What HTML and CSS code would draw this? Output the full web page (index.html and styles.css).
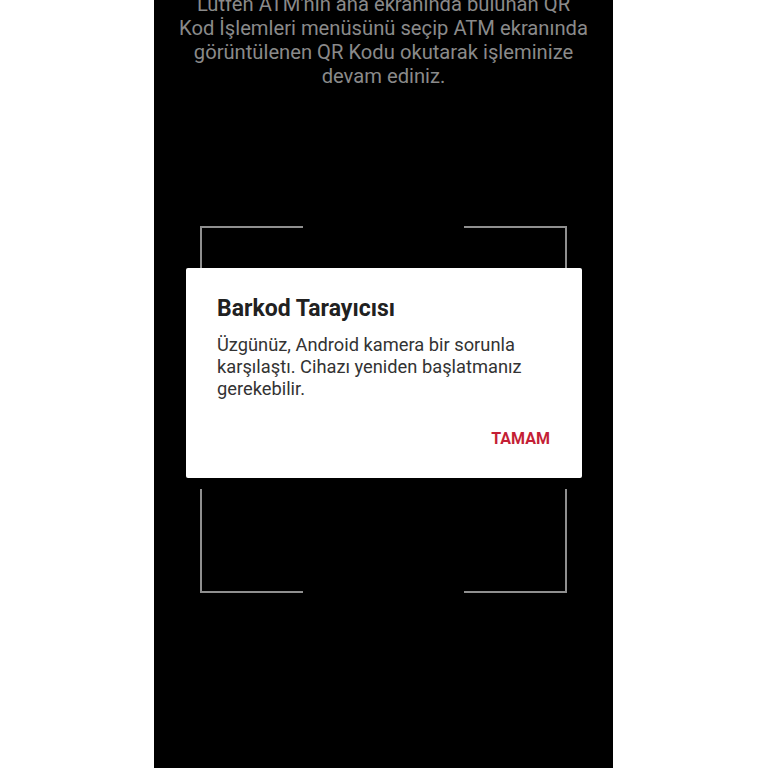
FILE: index.html
```html
<!DOCTYPE html>
<html lang="tr">
<head>
<meta charset="utf-8">
<link rel="stylesheet" href="styles.css">
</head>
<body>
<div class="page">
  <div class="phone">
    <p class="hint">Lütfen ATM'nin ana ekranında bulunan QR<br>Kod İşlemleri menüsünü seçip ATM ekranında<br>görüntülenen QR Kodu okutarak işleminize<br>devam ediniz.</p>
    <div class="frame">
      <span class="corner tl"></span>
      <span class="corner tr"></span>
      <span class="corner bl"></span>
      <span class="corner br"></span>
    </div>
    <div class="dialog">
      <h2 class="dialog-title">Barkod Tarayıcısı</h2>
      <p class="dialog-body">Üzgünüz, Android kamera bir sorunla karşılaştı. Cihazı yeniden başlatmanız gerekebilir.</p>
      <div class="dialog-actions"><span class="btn">TAMAM</span></div>
    </div>
  </div>
</div>
</body>
</html>
```

FILE: styles.css
```css
html, body {
  margin: 0;
  padding: 0;
  background: #ffffff;
  font-family: Roboto, "Noto Sans", sans-serif;
}
.page {
  width: 768px;
  height: 768px;
  overflow: hidden;
  display: flex;
  justify-content: flex-start;
}
.phone {
  position: relative;
  margin-left: 154px;
  width: 459px;
  height: 768px;
  background: #000000;
  display: flex;
  flex-direction: column;
  align-items: center;
  overflow: hidden;
}
.hint {
  margin: -8px 0 0 0;
  width: 440px;
  text-align: center;
  color: #8a8a8a;
  font-size: 20.2px;
  line-height: 24px;
  white-space: nowrap;
}
.frame {
  position: relative;
  margin-top: 138px;
  margin-left: -1px;
  width: 367px;
  height: 367px;
}
.corner {
  position: absolute;
  width: 101px;
  height: 42px;
  border-color: #8f8f8f;
  border-style: solid;
  border-width: 0;
}
.corner.tl { left: 0; top: 0; border-left-width: 2px; border-top-width: 2px; }
.corner.tr { right: 0; top: 0; border-right-width: 2px; border-top-width: 2px; }
.corner.bl { left: 0; bottom: 0; height: 102px; border-left-width: 2px; border-bottom-width: 2px; }
.corner.br { right: 0; bottom: 0; height: 102px; border-right-width: 2px; border-bottom-width: 2px; }
.dialog {
  position: absolute;
  left: 32px;
  top: 268px;
  width: 396px;
  height: 210px;
  box-sizing: border-box;
  background: #ffffff;
  border-radius: 2px;
  padding: 27px 32px 0 31px;
  display: flex;
  flex-direction: column;
}
.dialog-title {
  margin: 0;
  font-size: 23px;
  line-height: 28px;
  font-weight: 700;
  color: #212121;
}
.dialog-body {
  margin: 11px 0 0 0;
  font-size: 18.3px;
  line-height: 22px;
  color: #333333;
}
.dialog-actions {
  margin-top: 28px;
  display: flex;
  justify-content: flex-end;
}
.btn {
  font-size: 16px;
  line-height: 22px;
  font-weight: 700;
  color: #c41f36;
}
```
